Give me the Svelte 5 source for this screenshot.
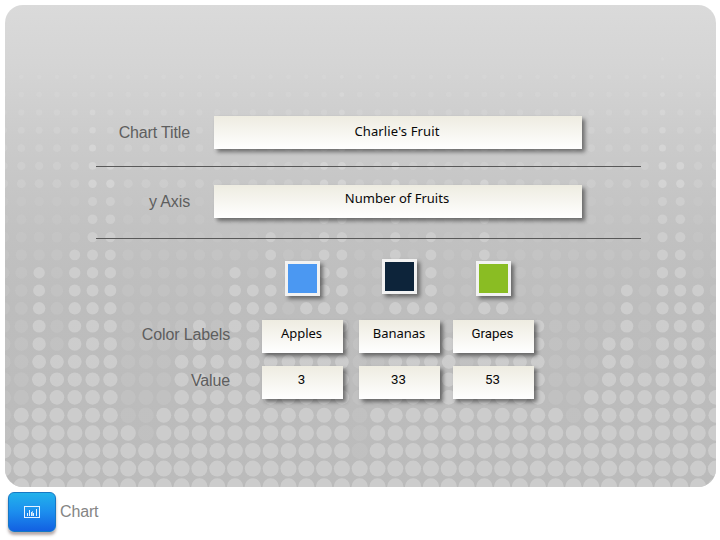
<script>
  const pitch = 17.81;
  // First bright row of every dot column, left to right
  const starts = [
    21, 19, 11, 16, 10, 2, 5, 20, 21, 19, 16, 14, 16, 11, 12, 9, 16, 13, 5, 0,
    22, 19, 5, 13, 9, 15, 17, 6, 13, 16, 14, 19, 20, 18, 15, 12, 17, -1, 5, 12, 18
  ];
  const dots = starts.flatMap((start, col) =>
    Array.from({ length: 25 }, (_, i) => {
      const row = i - 1;
      const bright = row >= start;
      return {
        x: 3.5 + col * pitch,
        y: 76.8 + row * pitch,
        r: Math.min(8.2, 2.1 + row * 0.385 - row * row * 0.0053) + (bright ? 0 : 0.3),
        bright,
        alpha: bright ? Math.min(0.72, 0.5 + row * 0.02) : row < 0 ? 0 : 0.27
      };
    })
  );
  const fruits = [
    { name: 'Apples', value: 3, color: '#4b98f2' },
    { name: 'Bananas', value: 33, color: '#0d243a' },
    { name: 'Grapes', value: 53, color: '#8abd23' }
  ];
</script>

<div class="app">
  <main class="panel">
    <svg class="dots" width="720" height="540" aria-hidden="true">
      {#each dots as d}
        <circle cx={d.x} cy={d.y} r={d.r} fill={d.y < 200 ? '#dcdcdc' : d.bright ? '#d3d3d3' : '#d0d0d0'} opacity={d.alpha} />
      {/each}
    </svg>
    <div class="form">
      <div class="row title">
        <span class="label">Chart Title</span>
        <div class="field wide"><span class="t1">Charlie's Fruit</span></div>
      </div>
      <div class="rule"></div>
      <div class="row axis">
        <span class="label">y Axis</span>
        <div class="field wide"><span class="t2">Number of Fruits</span></div>
      </div>
      <div class="rule second"></div>
      <div class="swatches">
        {#each fruits as f}
          <div class="swatch" style:background={f.color}></div>
        {/each}
      </div>
      <div class="row names">
        <span class="label">Color Labels</span>
        {#each fruits as f}
          <div class="field"><span class={f.name.toLowerCase()}>{f.name}</span></div>
        {/each}
      </div>
      <div class="row values">
        <span class="label">Value</span>
        {#each fruits as f}
          <div class="field"><span class="num">{f.value}</span></div>
        {/each}
      </div>
    </div>
  </main>
  <footer>
    <button aria-label="Chart">
      <svg width="16" height="12" viewBox="0 0 16 12">
        <rect x=".5" y=".5" width="15" height="11" fill="none" stroke="#e6f3ff" />
        <path d="M3.5 10V7M5.5 10V4M7.5 10V6M9.5 10V7M12.5 10V3" stroke="#e6f3ff" fill="none" />
        <path d="M8.5 10V5" stroke="#a5d2fb" />
      </svg>
    </button>
    <span>Chart</span>
  </footer>
</div>

<style>
  :global(body) { background: #fff; overflow: hidden; }
  .app {
    width: 720px;
    height: 540px;
    box-sizing: border-box;
    padding: 5px 4px 0 4.5px;
    overflow: hidden;
    font-family: 'Liberation Sans', Arial, sans-serif;
  }
  .panel {
    position: relative;
    height: 482px;
    border-radius: 18px;
    overflow: hidden;
    background: linear-gradient(#dadada, #d5d5d5 12%, #cbcbcb 28%, #c1c1c1 48%, #bdbdbd 62%, #bbb);
  }
  .dots { position: absolute; left: -4.5px; top: -5px; }
  .form { position: relative; padding: 111px 0 0 91.5px; }
  .row { display: flex; align-items: flex-start; }
  .title, .axis { height: 34px; }
  .label {
    width: 94px;
    text-align: right;
    font-size: 16px;
    line-height: 18px;
    padding-top: 8px;
    color: #5e5e5e;
    white-space: nowrap;
    letter-spacing: -0.14px;
  }
  .field {
    box-sizing: border-box;
    width: 81px;
    height: 33px;
    background: linear-gradient(#eeece1, #fff);
    box-shadow: 3px 3px 4px rgba(0, 0, 0, .46);
    text-align: center;
    color: #080808;
    font: 13px/18px 'Noto Sans', 'Open Sans', sans-serif;
    padding: 4px 2px 0 0;
    white-space: nowrap;
  }
  .wide { width: 368px; margin-left: 24px; padding-top: 6px; }
  .t1 { letter-spacing: .13px; }
  .rule { width: 545px; height: 1px; background: #595959; margin: 16px 0 18px; }
  .axis .wide { padding-top: 4px; }
  .second { margin: 19px 0 20px; }
  .swatches { display: flex; padding-left: 189px; height: 37px; }
  .swatch {
    box-sizing: border-box;
    width: 35px;
    height: 35px;
    border: 3px solid #f2f2f2;
    box-shadow: 3px 3px 4px rgba(0, 0, 0, .45);
    margin-top: 2px;
  }
  .swatch:nth-child(2) { margin: 0 59px 0 62px; }
  .names, .values { height: 46px; }
  .names { padding-top: 24px; }
  .names .label, .values .label { width: 134px; margin-right: 32px; padding-top: 6px; }
  .names .field:nth-child(3), .values .field:nth-child(3) { margin: 0 13px 0 16px; }
  .names .field:nth-child(3) { padding-right: 1px; }
  .num, .grapes { font-family: Roboto, sans-serif; font-size: 13.3px; }
  footer { display: flex; align-items: flex-start; padding: 5px 0 0 3.5px; }
  button {
    width: 48px;
    height: 40px;
    display: flex;
    align-items: center;
    justify-content: center;
    padding: 0;
    border: 1px solid #1678c4;
    border-radius: 6px;
    background: linear-gradient(#22b2eb, #1c8fee 48%, #1260e2);
    box-shadow: 0 3px 3px rgba(70, 40, 40, .4);
  }
  footer span { margin: 11px 0 0 4px; font-size: 16px; line-height: 18px; color: #858585; letter-spacing: -.15px; }
</style>
